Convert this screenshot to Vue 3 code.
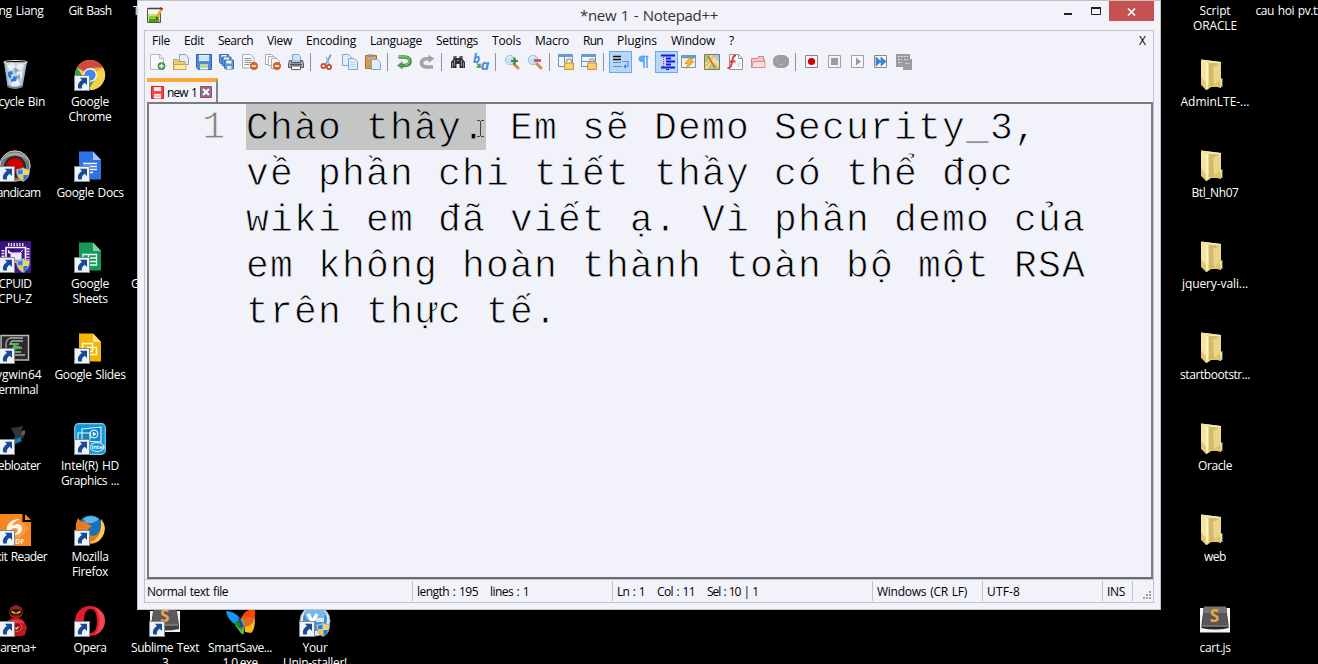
<script setup>
// Adjusts letter spacing so a run of text takes the given width in pixels.
const vFit = {
  mounted(el, { value }) {
    if (!value) return
    const n = el.textContent.length
    const natural = el.getBoundingClientRect().width
    el.style.letterSpacing = (value - natural) / n + 'px'
  },
}

const shortcut = '<g transform="translate(0 16)"><rect x=".5" y=".5" width="15" height="15" fill="#eef3f7" stroke="#85898d"/><path d="M5.8 2.8H13V10l-2.3-2.2C8.3 9.200 7.600 11 8 13.600H4.300C3.200 9.800 4.600 7.300 8 5z" fill="#174a94"/></g>'
const shield = '<g transform="translate(17 17)"><path d="M7 .5C9 2 11 2.300 13.500 2.300 13.800 8 12 12 7 14.500 2 12 .2 8 .5 2.300 3 2.300 5 2 7 .5z" fill="#cfd6dc" stroke="#808a92" stroke-width=".8"/><path d="M6.600 2C5 3 3.500 3.400 1.800 3.500V7.200H6.600z" fill="#2a82d8"/><path d="M7.400 2C9 3 10.500 3.400 12.200 3.500V7.200H7.400z" fill="#ffd23a"/><path d="M6.600 8H2C2.500 10.500 4 12.200 6.600 13.400z" fill="#ffc52a"/><path d="M7.400 8H12C11.500 10.500 10 12.200 7.400 13.400z" fill="#2277cf"/></g>'
const doc = (c, f, inner) => `<path d="M5 1.500H19L27 10V29.500H5z" fill="${c}"/><path d="M19 1.500L27 10H19z" fill="${f}"/>${inner}`

const art = {
  bin: '<path d="M5 3L8.500 28Q16 31.500 23.500 28L28 3z" fill="#9fb4c6"/><path d="M7 4L10 27Q16 29.500 22 27L26 4z" fill="#bccddc"/><path d="M8 7l5-4 4 5-6 4zM19 4l6 2-3 6-5-3zM10 14l5 2-1 5-3-1zM18 13l6-1-2 8-4-2zM12 22l7-1 2 5-8 1z" fill="#eaf1f6"/><path d="M15 8l5 3-4 3zM16 18l5-3 0 5z" fill="#8da5b9"/><ellipse cx="16.500" cy="3.300" rx="11.500" ry="1.800" fill="none" stroke="#d9e0e5" stroke-width="1.200"/><path d="M9 13l4-1 1 3-2 1 1 2-2 2-2-3zM14 17l4 1-1 4-5 1 0-3 2-1z" fill="#2e7cd8"/><path d="M9 27Q16 31 23 27" fill="none" stroke="#6b7b87" stroke-width="1.500"/>',
  chrome: '<circle cx="16" cy="16" r="15" fill="#f3cf4b"/><path d="M16 16L3 8.500A15 15 0 0 1 29 8.500L16 9z" fill="#d1493d"/><path d="M3 8.500A15 15 0 0 0 14.500 31L22 19 10 19z" fill="#2f9e58"/><path d="M16 9H29.300A15 15 0 0 1 14.500 31L22 19z" fill="#f5d14c"/><path d="M16 9H29.300L22 13z" fill="#e2b33a"/><circle cx="16" cy="16" r="7" fill="#f2f2f2"/><circle cx="16" cy="16" r="5.600" fill="#4286f0"/>' + shortcut,
  bandicam: '<circle cx="16" cy="16" r="15.200" fill="#747474" stroke="#d0d0d0"/><path d="M2 12A15 15 0 0 1 30 12 18 18 0 0 0 2 12z" fill="#a7a7a7"/><circle cx="16" cy="17" r="11" fill="#242424"/><ellipse cx="16" cy="15.500" rx="8.500" ry="7.500" fill="#cf0000"/>' + shortcut + shield,
  docs: doc('#2f72e8', '#a6c4f7', '<path d="M9 13.500H23M9 16.500H23M9 19.500H23M9 22.500H19" stroke="#f1f6ff" stroke-width="1.300"/>') + shortcut,
  sheets: doc('#14995b', '#8ad0ad', '<path d="M9 13.500H22.500V24H9zM9 17H22.500M9 20.500H22.500M14.500 13.500V24" fill="none" stroke="#eefaf4" stroke-width="1.300"/>') + shortcut,
  slides: doc('#f5b400', '#fbe08a', '<path d="M8.500 11.500H18.500V19.500H8.500zM13.500 15.500H22.500V22.500H13.500z" fill="none" stroke="#fffaf0" stroke-width="1.500"/>') + shortcut,
  cpuz: '<path d="M0 0H32V32H0z" fill="#38117c"/><path d="M0 22L32 0V32H0z" fill="#4a1b94" opacity=".6"/><path d="M7 6.500H26.500V21H7z" fill="none" stroke="#fff" stroke-width="1.600"/><path d="M9 3.500H25M4 9V22M29 7V20" stroke="#e8ddff" stroke-width="3" stroke-dasharray="1.400 1.400"/><path d="M12 12h10v7H12zM9.500 9v3h3M24 9l-3 3" fill="#f0eaff" stroke="#f0eaff"/>' + shortcut + shield,
  cygwin: '<path d="M2 3.500H29.500V28H2z" fill="#2b2b2b" stroke="#b9bbb9" stroke-width="1.500"/><path d="M24 6H11Q7 8 7 12V20H22M24 9H13L11 12H20M13 16h10M14 23H26" fill="none" stroke="#aab0aa" stroke-width="1.300"/><path d="M13 12l10 3-7 3z" fill="#31c740"/>' + shortcut,
  debloat: '<path d="M12 5L24 3 22 10l4-3-1 7-6 5-6 1 3-7z" fill="#30363c"/><path d="M23 8l3-1 0 4-4 2z" fill="#59636b"/><path d="M13 18l8-4 2 4-7 3z" fill="#127bb8"/>' + shortcut,
  intel: '<rect x=".7" y=".7" width="30.600" height="30.600" rx="4" fill="#1497d8" stroke="#77d1f5" stroke-width="1.200"/><path d="M8 6L27 4V19L8 18zM4 10H16V17H4z" fill="#1186c9" stroke="#e6f7ff" stroke-width="1.100"/><circle cx="20" cy="11" r="4" fill="none" stroke="#fff"/><path d="M18.800 8.800L22.500 11 18.800 13.200z" fill="#fff"/><ellipse cx="23" cy="24" rx="7" ry="4.500" fill="none" stroke="#def3ff"/><text x="17.500" y="26.300" font-family="Open Sans, sans-serif" font-size="5.500" font-weight="700" fill="#fff">intel</text>' + shortcut,
  foxit: '<path d="M0 0H23.500V8H32V32H0z" fill="#f5871f"/><path d="M26 0l6 6H26z" fill="#f5871f"/><path d="M19 4l11 11-11 11L8 15z" fill="#f9a75a" opacity=".6"/><path d="M8 20C6 10 12 5 21 5c-5 2-8 4-7 7 4-4 10-2 9 4-1 4-5 6-9 4 3 0 5-2 5-4-1-3-6-3-11 4z" fill="#fff3e3"/><text x="16" y="30" font-family="Open Sans, sans-serif" font-size="7" font-weight="700" fill="#fff3e3">DF</text>' + shortcut,
  firefox: '<circle cx="16.500" cy="15" r="13.500" fill="#1d6fb8"/><path d="M9 5Q17-1 25 5 20 10 13 9z" fill="#59b9e6"/><path d="M27 5Q33 12 29 22 24 31 14 30 4 27 2 17 1 10 4 4L7 8Q12 6 14 10L18 12 14 15Q13 21 19 22 26 21 27 13z" fill="#e77b1f"/><path d="M27 5Q34 14 28 23 22 31 13 28 23 28 26 18 28 12 27 5z" fill="#f8ce4b"/>' + shortcut,
  garena: '<circle cx="17" cy="7" r="6.800" fill="#94201f"/><path d="M11 6Q17 2 23 6V9Q17 12 11 9z" fill="#2c1111"/><path d="M12.500 6.500l4 2M21.500 6.500l-4 2" stroke="#ffb21f" stroke-width="1.400"/><path d="M8 16Q16 10 24 15L28 22 26 30Q17 33 8 29z" fill="#c4161c"/><path d="M9 18Q17 13 25 18" stroke="#ee4848" stroke-width="1.500" fill="none"/><circle cx="18" cy="22" r="4.500" fill="#8d0e12" stroke="#e46a6a"/><path d="M15 23l6-2-3 4z" fill="#f09a9a"/>' + shortcut,
  opera: '<path fill-rule="evenodd" d="M16 1A15 15 0 1 0 16 31 15 15 0 0 0 16 1zM16.500 4C21 4 23 9 23 16S21 28 16.500 28 10 23 10 16 12 4 16.500 4z" fill="#e41b2c"/><path d="M20 2Q31 6 31 16 30 27 20 30.500 26 24 25.500 14 25 7 20 2z" fill="#f2484f"/>' + shortcut,
  sublime: '<path d="M1 6H31V27H1z" fill="#f0f0f0"/><path d="M5 0H27L30 20V24Q16 27 2 24V20z" fill="#3f3f3f"/><path d="M5 1H27L29 19H3z" fill="#5b5b5b"/><path d="M3 20H29" stroke="#aaa"/><text x="11" y="16.500" font-family="Open Sans, sans-serif" font-size="17" font-weight="700" fill="#f2a24a">S</text>' + shortcut,
  cart: '<path d="M1 3H31V27.500H1z" fill="#f4f4f4"/><path d="M5 1H27L29.500 20V23Q16 26 2.500 23V20z" fill="#242424"/><path d="M5 1.500H27L29 20.500H3z" fill="#565656"/><path d="M5 2H27L28 8H4z" fill="#747474"/><path d="M3 21H29" stroke="#aaa"/><text x="10.700" y="17" font-family="Open Sans, sans-serif" font-size="17" font-weight="700" fill="#f5a340">S</text>',
  smart: '<path d="M2 6Q10 6 16 13L18 22Q4 18 2 6z" fill="#1298fa"/><path d="M17 13Q23 2 31 5V15L19 17z" fill="#ff4500"/><path d="M11 20Q13 12 20 14L20 28Q19 31 16 27z" fill="#59b75a"/><path d="M11 18Q13 14 17 16L18 25Q13 23 11 18z" fill="#0a9118"/><path d="M20 18L31 14Q31 25 27 28L21 27z" fill="#fdb813"/><path d="M20 13Q26 10 30 14 29 21 20 22z" fill="#dd6b27"/><path d="M15 11L20 22 17 22 14 14z" fill="#3c2bbb"/>',
  unins: '<circle cx="16" cy="16" r="15" fill="#e5eaee" stroke="#a4afb7"/><circle cx="16" cy="14" r="12" fill="#3b8fdc"/><path d="M5 8Q16-2 27 8L24 15H8z" fill="#74b8ef"/><path d="M9 9l5 9M18 9l-5 9" stroke="#fff" stroke-width="3.500"/><path d="M17 13h8v4h-8z" fill="#dbe7f0"/>' + shortcut + shield,
  folder: '<path d="M2 .5L22 3V28L12 28 8 31 2 25.500z" fill="#e6d088"/><path d="M8 3L22 5V28L10 27z" fill="#d3b96c"/><path d="M14 8L22 4V20L15 26z" fill="#ead58c"/><path d="M2 .5L22 3V4.500L8 3.500z" fill="#f5eaba"/><path d="M2 1L9 4V28.500L7.500 31 2 25.500z" fill="#f4e69c"/><path d="M2 18L7 24V31L2 25.500z" fill="#e3c772"/><path d="M7 4H9.500V24L7 30z" fill="#fff5be"/><path d="M17 25L22 19V29L14 27z" fill="#f0c63f"/><path d="M21.500 20H23V27L21 29z" fill="#fff"/><path d="M23 19V28" stroke="#b7b08b"/><path d="M21 23V28" stroke="#8db9df"/>',
}

// col and row are desktop grid slots; each line is [text, width]; dx shifts a label.
const desktop = [
  { col: 1, row: 1, lines: [['ng Liang', 45]], dx: 6 },
  { col: 2, row: 1, lines: [['Git Bash', 43]] },
  { col: 3, row: 1, lines: [['T', 6]], dx: -29 },
  { col: 17, row: 1, lines: [['Script', 31], ['ORACLE', 44]] },
  { col: 18, row: 1, lines: [['cau hoi pv.txt', 71]], dx: 1 },
  { col: 1, row: 2, art: 'bin', lines: [['Recycle Bin', 60]] },
  { col: 2, row: 2, art: 'chrome', lines: [['Google', 38], ['Chrome', 43]] },
  { col: 17, row: 2, art: 'folder', lines: [['AdminLTE-...', 69]] },
  { col: 1, row: 3, art: 'bandicam', lines: [['Bandicam', 51]] },
  { col: 2, row: 3, art: 'docs', lines: [['Google Docs', 67]] },
  { col: 17, row: 3, art: 'folder', lines: [['Btl_Nh07', 47]] },
  { col: 1, row: 4, art: 'cpuz', lines: [['CPUID', 33], ['CPU-Z', 34]] },
  { col: 2, row: 4, art: 'sheets', lines: [['Google', 38], ['Sheets', 35]] },
  { col: 3, row: 4, lines: [['G', 8]], dx: -30 },
  { col: 17, row: 4, art: 'folder', lines: [['jquery-vali...', 66]] },
  { col: 1, row: 5, art: 'cygwin', lines: [['Cygwin64', 53], ['Terminal', 46]] },
  { col: 2, row: 5, art: 'slides', lines: [['Google Slides', 71]] },
  { col: 17, row: 5, art: 'folder', lines: [['startbootstr...', 70]] },
  { col: 1, row: 6, art: 'debloat', lines: [['Debloater', 51]] },
  { col: 2, row: 6, art: 'intel', lines: [['Intel(R) HD', 58], ['Graphics ...', 58]] },
  { col: 17, row: 6, art: 'folder', lines: [['Oracle', 34]] },
  { col: 1, row: 7, art: 'foxit', lines: [['Foxit Reader', 64]] },
  { col: 2, row: 7, art: 'firefox', lines: [['Mozilla', 37], ['Firefox', 36]] },
  { col: 17, row: 7, art: 'folder', lines: [['web', 22]] },
  { col: 1, row: 8, art: 'garena', lines: [['Garena+', 44]], dx: -1 },
  { col: 2, row: 8, art: 'opera', lines: [['Opera', 33]] },
  { col: 3, row: 8, art: 'sublime', lines: [['Sublime Text', 68], ['3', 6]] },
  { col: 4, row: 8, art: 'smart', lines: [['SmartSave...', 64], ['1.0.exe', 35]] },
  { col: 5, row: 8, art: 'unins', lines: [['Your', 25], ['Unin-staller!', 64]] },
  { col: 17, row: 8, art: 'cart', lines: [['cart.js', 31]] },
]

const menus = [
  ['File', 18], ['Edit', 20], ['Search', 35], ['View', 25], ['Encoding', 50], ['Language', 52],
  ['Settings', 42], ['Tools', 29], ['Macro', 34], ['Run', 20], ['Plugins', 40], ['Window', 44], ['?', 6],
]

const page = (x, y, w, h, c = '#7da7d9', f = '#e2effb') =>
  `<path d="M${x} ${y}h${w - 3}l3 3v${h - 3}h-${w}z" fill="${f}" stroke="${c}"/>`
const floppy = '<path d="M.5.5h15v15h-13l-2-2z" fill="#4f8cd6" stroke="#2e62ad"/><path d="M3 1h10v6H3z" fill="#e9f3fc"/><path d="M4 10h8v5.500H4z" fill="#f2f7fb"/><path d="M4 11h8M4 13h8" stroke="#7cb85b"/><path d="M3 3h10M3 5h10" stroke="#b7d3ee"/>'
const smallFloppy = (x, y) => `<g transform="translate(${x} ${y})"><path d="M.5.500h9v9h-8l-1-1z" fill="#5d95da" stroke="#3a6db5"/><path d="M2.500 1h5v3h-5z" fill="#edf5fc"/><path d="M3 6.500h4.500v3H3z" fill="#d7ebc8"/></g>`
const minus = '<circle cx="12" cy="12" r="3.700" fill="#df6420" stroke="#b94a10" stroke-width=".6"/><path d="M9.800 12h4.400" stroke="#fff" stroke-width="1.500"/>'
const lock = '<path d="M8.500 9V7.500a2.500 2.500 0 0 1 5 0V9" fill="none" stroke="#b4aa93" stroke-width="1.500"/><path d="M6.500 9h9v6.500h-9z" fill="#f3c45a" stroke="#d69a32"/><path d="M8 11h6M8 13h6" stroke="#ffe49a"/>'
const lens = '<path d="M9.500 9.500l4.500 4.500" stroke="#c99143" stroke-width="3" stroke-linecap="round"/><circle cx="6" cy="6" r="4.700" fill="#c5e0f5" stroke="#a8bdd0"/><path d="M3 5q1-2 4-2" fill="none" stroke="#fff"/>'
const macroBox = (c, inner) => `<path d="M1.500 1.500h12v12h-12z" fill="#f5f6fb" stroke="${c}"/>${inner}`

const glyphs = {
  new: '<path d="M.5.5h9l4 4v11H.5z" fill="#f8f9fc" stroke="#b8bac0"/><path d="M9.500.5v4h4" fill="none" stroke="#b8bac0"/><circle cx="11.500" cy="12" r="3.600" fill="#4b9b4a" stroke="#307b34" stroke-width=".6"/><path d="M9.300 12h4.400M11.500 9.800v4.400" stroke="#fff" stroke-width="1.300"/>',
  open: page(6.5, 0.5, 9, 10) + '<path d="M0.500 5.500h4l1.500 2h6v8H.5z" fill="#f0cb78" stroke="#c99a43"/><path d="M1 10.500h12v5H1z" fill="#ffe9a9" stroke="#d2a650"/>',
  save: floppy,
  saveAll: smallFloppy(0, 0) + smallFloppy(2.500, 2.500) + smallFloppy(5, 5.500),
  close: '<path d="M.5.500h8l3.500 3.500v10H.5z" fill="#f8f9fc" stroke="#a9abb0"/><path d="M2.500 4.500h7M2.500 6.500h7M2.500 8.500h7M2.500 10.500h5" stroke="#8d9096"/>' + minus,
  closeAll: '<path d="M.5.500h6l2 2v8h-8z" fill="#fafbfd" stroke="#a9abb0"/><path d="M3.500 2.500h6l2 2v7h-8z" fill="#fafbfd" stroke="#a9abb0"/><path d="M6.500 4.500h5l3 3v7h-8z" fill="#fafbfd" stroke="#a9abb0"/>' + minus,
  print: '<path d="M4.500 7V.500h6l2 2V7z" fill="#cce4f8" stroke="#7aa6d6"/><path d="M1.500 6.500h2v2h9v-2h2l1 3v4h-15v-4z" fill="#aeb1b6" stroke="#53565b"/><path d="M3.500 12h9v3.500h-9z" fill="#fff" stroke="#5a5d62"/><path d="M2 10.500h12" stroke="#56595e" stroke-width="1.500"/>',
  cut: '<path d="M12 .500L7 10" stroke="#7c9fc5" stroke-width="1.800"/><path d="M7 3L10.500 10.500" stroke="#9db7d4" stroke-width="1.500"/><circle cx="4.500" cy="12" r="2.100" fill="none" stroke="#c24a38" stroke-width="1.800"/><circle cx="10" cy="13" r="2.100" fill="none" stroke="#c24a38" stroke-width="1.800"/>',
  copy: page(0.5, 0.5, 9, 11) + page(6.5, 4.5, 9, 11) + '<path d="M8.500 8.500h4M8.500 10.500h5M8.500 12.500h5" stroke="#b3d0ee"/>',
  paste: '<path d="M.5 1.500h11v13H.5z" fill="#d29a4b" stroke="#a87328"/><path d="M3 .500h6v3H3z" fill="#8c8d90"/><path d="M2 4h8" stroke="#efc27b"/>' + page(6.5, 5.5, 9, 10),
  undo: '<path d="M2.500 3h6q5.500.200 5.500 4.300T8.500 11.500H5" fill="none" stroke="#3c9140" stroke-width="3.600"/><path d="M3 2.800h5.500q4.800.200 4.800 4T8.500 11.500" fill="none" stroke="#7cc46c" stroke-width="1.500"/><path d="M6.500 7.300v8.200L1 11.500z" fill="#4fa24a"/>',
  redo: '<path d="M14 13H7Q2.500 12.500 2.500 9T7 4.800H11" fill="none" stroke="#a2a3a6" stroke-width="3.600"/><path d="M9.500.800v8L15.500 4.800z" fill="#a2a3a6"/>',
  find: '<path d="M3.500 2h3v2h3V2h3v3l2.500 3v6H9.500v-4h-3v4H1V8l2.500-3z" fill="#2e3033"/><path d="M2.500 8.500v5M4.500 6v6M11.500 6v6M13.500 8.500v5M4 3h2M10 3h2M7 6.500h2" stroke="#8b9095"/>',
  replace: '<text x="0" y="9" font-family="Open Sans, sans-serif" font-size="12" font-weight="700" font-style="italic" fill="#3e86da">b</text><text x="7.500" y="15.500" font-family="Open Sans, sans-serif" font-size="15" font-weight="700" font-style="italic" fill="#4a8fdc">a</text><path d="M4 9.500l3 3M7 9.500v3.500H3.500" stroke="#3a8f44" stroke-width="1.300" fill="none"/>',
  zoomIn: lens + '<path d="M10.500 3.500v7M7 7h7" stroke="#3c8b3a" stroke-width="2.200"/>',
  zoomOut: lens + '<path d="M7 6.500h7" stroke="#e1434a" stroke-width="2.600"/>',
  syncV: '<path d="M.5.500h14v12H.5z" fill="#eff6fd" stroke="#6592c9"/><path d="M0 2h15" stroke="#6c9bd2" stroke-width="2"/><path d="M6.500 3v9" stroke="#6592c9"/>' + lock,
  syncH: '<path d="M.5.500h14v12H.5z" fill="#eff6fd" stroke="#6592c9"/><path d="M0 2h15" stroke="#6c9bd2" stroke-width="2"/><path d="M.500 7.500h14" stroke="#6592c9"/>' + lock,
  wrap: '<path d="M1 2.500h8M1 5.500h8" stroke="#151515" stroke-width="1.300"/><path d="M1 8.500h8M1 12.500h9" stroke="#7486a0"/><path d="M10 7.500h6v5h-3" fill="none" stroke="#5b93da" stroke-width="1.200"/><path d="M14 10v5L11.500 12.500z" fill="#3f7fd0"/>',
  pilcrow: '<path d="M9 14V3M12 14V3M13.500 2.500H6" fill="none" stroke="#61a9ee" stroke-width="1.700"/><path d="M9 1.700H7q-3.500 0-3.500 3T7 8h2z" fill="#61a9ee"/>',
  indent: '<path d="M3 1.500h14M8 4.500h5M8 7.500h9M8 10.500h5M3 13.500h14" stroke="#1515ea" stroke-width="1.800"/><path d="M5.500 3v10" stroke="#d33" stroke-dasharray="1 1"/><path d="M8 15.500h3" stroke="#1515ea"/>',
  udl: '<path d="M.5 1.500h14v12H.5z" fill="#f7f1dc" stroke="#6898cf"/><path d="M0 3h15" stroke="#6898cf" stroke-width="2.500"/><path d="M8 4.500h4l-2 3h3l-8 7 2-5H4z" fill="#f6b337" stroke="#d88a1f" stroke-width=".7"/>',
  map: '<path d="M.5.500h15v15H.5z" fill="#e9dfa0" stroke="#7d746b"/><path d="M1 1h5l-1 5-4 3z" fill="#9ccb78"/><path d="M8 1h7v7z" fill="#9ccdf0"/><path d="M7 9l8 6H3z" fill="#a9d282"/><path d="M1 13L10 1M6 7l9 7" stroke="#f1b640" stroke-width="1.500" fill="none"/><path d="M4 2l7 12" stroke="#d6503d" stroke-width="1.300" fill="none"/>',
  func: '<path d="M2.500.5h9l4 4v11h-13z" fill="#fafbfd" stroke="#94979d"/><path d="M11.500.5v4h4" fill="none" stroke="#94979d"/><path d="M9 1.500Q6 1 5.500 6L4 12q-1 2.500-3.500 2M2.500 7.500h6" fill="none" stroke="#df3a3a" stroke-width="2"/><path d="M11 8v5M13 9v4" stroke="#a9acb2" stroke-dasharray="1 1"/>',
  tree: '<path d="M1.500 13.500v-9h6l1-2h5v3h1v8z" fill="#f3c7c5" stroke="#d48181"/><path d="M1.500 13.500l2-6h11.500v6z" fill="#f8dedb" stroke="#dc8d8b"/>',
  monitor: '<path d="M5 1h6q5 2 5 5v3q0 3-5 5H5Q0 12 0 9V6q0-3 5-5z" fill="#9c9da0"/><path d="M3 6.500h1.500M11.500 6.500H13M5.500 10l2.500 1 2.500-1" stroke="#b8babd" fill="none"/>',
  rec: macroBox('#86888c', '<circle cx="7.500" cy="7.500" r="3.600" fill="#cf0000"/>'),
  stop: macroBox('#9fa1a5', '<path d="M4 4h7v7H4z" fill="#9b9c9e"/>'),
  play: macroBox('#9fa1a5', '<path d="M6 3.500l5 4-5 4z" fill="#97989b"/>'),
  fast: macroBox('#86888c', '<path d="M3 3l5 4.500L3 12zM8 3l5 4.500L8 12z" fill="#3f84d6" stroke="#2868b6" stroke-width=".6"/>'),
  saveMacro: '<path d="M0 0h14v5h2v11H7v-3H0z" fill="#9b9c9f"/><path d="M2 2.500h10M2 5.500h4M2 8.500h4M8 5.500h4M9.500 9.500h4" stroke="#dfe1e7" stroke-dasharray="2 1" fill="none"/>',
}

const toolbar = [
  ['new', 'open', 'save', 'saveAll', 'close', 'closeAll', 'print'],
  ['cut', 'copy', 'paste'],
  ['undo', 'redo'],
  ['find', 'replace'],
  ['zoomIn', 'zoomOut'],
  ['syncV', 'syncH'],
  ['wrap', 'pilcrow', 'indent', 'udl', 'map', 'func', 'tree', 'monitor'],
  ['rec', 'stop', 'play', 'fast', 'saveMacro'],
]
const pressed = ['wrap', 'indent']

const status = [
  { cls: 'kind', parts: [['Normal text file', 81]] },
  { cls: 'size', parts: [['length : 195', 61], ['lines : 1', 39]] },
  { cls: 'place', parts: [['Ln : 1', 28], ['Col : 11', 38], ['Sel : 10 | 1', 51]] },
  { cls: 'eol', parts: [['Windows (CR LF)', 90]] },
  { cls: 'enc', parts: [['UTF-8', 33]] },
  { cls: 'ins', parts: [['INS', 18]] },
]

const rest = [
  'về phần chi tiết thầy có thể đọc',
  'wiki em đã viết ạ. Vì phần demo của',
  'em không hoàn thành toàn bộ một RSA',
  'trên thực tế.',
]
</script>

<template>
  <div class="screen">
    <div class="icons">
      <div
        v-for="(it, i) in desktop"
        :key="i"
        class="item"
        :style="{ gridColumn: it.col, gridRow: it.row }"
      >
        <svg class="art" viewBox="0 0 32 32" v-html="art[it.art] || ''"></svg>
        <div class="label" :style="{ transform: it.dx ? `translateX(${it.dx}px)` : null }">
          <span v-for="l in it.lines" :key="l[0]" v-fit="l[1]">{{ l[0] }}</span>
        </div>
      </div>
    </div>

    <div class="window">
      <header class="titlebar">
        <svg class="appicon" viewBox="0 0 16 16">
          <path d="M.5 1.500h13v14H.5z" fill="#f4f6ee" stroke="#555" />
          <path d="M1 7h12v8H1z" fill="#c5e27c" />
          <path d="M2 9h10v6H2z" fill="#8fc92a" />
          <path d="M2 12h10v3H2z" fill="#4e9b22" />
          <path d="M1.500 1.500h12" stroke="#333" stroke-width="2" stroke-dasharray="1 1" />
          <path d="M15 1.500L10 10" stroke="#efa42a" stroke-width="2.500" />
          <path d="M13.500 0l2.500 1.500-1 1.500-2.500-1.500z" fill="#8e1f1f" />
          <path d="M9 12.500l.300-3 2 1.200z" fill="#3a2a15" />
        </svg>
        <div class="title"><span v-fit="138">*new 1 - Notepad++</span></div>
        <div class="controls">
          <svg viewBox="0 0 44 20" class="minmax">
            <path d="M3 13h8v2H3z" fill="#222" />
            <path d="M30.500 8.500h9v6h-9z" fill="none" stroke="#222" />
            <path d="M30 8h10" stroke="#222" stroke-width="2" />
          </svg>
          <div class="closebtn">
            <svg viewBox="0 0 9 8"><path d="M1 .5l7 7M8 .5l-7 7" stroke="#fff" stroke-width="1.700" /></svg>
          </div>
        </div>
      </header>

      <div class="frame">
        <nav class="menu">
          <span v-for="m in menus" :key="m[0]" v-fit="m[1]">{{ m[0] }}</span>
          <span v-fit="7" class="docclose">X</span>
        </nav>

        <div class="toolbar">
          <div v-for="(g, gi) in toolbar" :key="gi" class="group">
            <div v-for="n in g" :key="n" class="tool" :class="{ on: pressed.includes(n) }">
              <svg viewBox="0 0 16 16" v-html="glyphs[n]"></svg>
            </div>
          </div>
        </div>

        <div class="tabs">
          <div class="tab">
            <svg class="unsaved" viewBox="0 0 13 13">
              <path d="M.500.500h12v12h-12z" fill="#f4484c" stroke="#dc2026" />
              <path d="M3 1h7v4H3z" fill="#fde5e5" />
              <path d="M3 8h7v4.500H3z" fill="#fff" />
              <path d="M3 10h7" stroke="#f27b7b" />
            </svg>
            <span v-fit="30">new 1</span>
            <svg class="tabclose" viewBox="0 0 12 12">
              <path d="M.500.500h11v11h-11z" fill="#8d6f90" stroke="#a14a62" />
              <path d="M3 3l6 6M9 3L3 9" stroke="#fff" stroke-width="2" />
            </svg>
          </div>
        </div>

        <div class="editor">
          <div class="gutter">1</div>
          <div class="text">
            <div class="line"><span class="sel">Chào thầy.</span> Em sẽ Demo Security_3,</div>
            <div v-for="r in rest" :key="r" class="line">{{ r }}</div>
            <svg class="ibeam" viewBox="0 0 7 17">
              <path d="M0 .5h3M4 .5h3M3.500 1v15M0 16.500h3M4 16.500h3" stroke="#444" fill="none" />
            </svg>
          </div>
        </div>

        <footer class="status">
          <div v-for="s in status" :key="s.cls" class="cell" :class="s.cls">
            <span v-for="p in s.parts" :key="p[0]" v-fit="p[1]">{{ p[0] }}</span>
          </div>
          <svg class="grip" viewBox="0 0 8 8">
            <path d="M6 0h2v2H6zM3 3h2v2H3zM6 3h2v2H6zM0 6h2v2H0zM3 6h2v2H3zM6 6h2v2H6z" fill="#a0a0a4" />
          </svg>
        </footer>
      </div>
    </div>
  </div>
</template>

<style>
body {
  margin: 0;
  background: #000;
}
</style>

<style scoped>
.screen {
  position: relative;
  width: 1318px;
  height: 664px;
  overflow: hidden;
  background: #000;
  font: 12px/15px "Open Sans", "Noto Sans", sans-serif;
  word-spacing: 1px;
  color: #000;
}
.screen span {
  white-space: pre;
}
.icons {
  display: grid;
  grid-template-columns: repeat(18, 75px);
  grid-template-rows: repeat(8, 91px);
  margin: -32px 0 0 -22px;
}
.item {
  color: #fff;
}
.art {
  display: block;
  width: 32px;
  height: 32px;
  margin-left: 21px;
}
.label {
  display: flex;
  flex-direction: column;
  align-items: center;
  width: 74px;
  margin-top: 3px;
}
.window {
  position: absolute;
  left: 137px;
  top: 0;
  width: 1024px;
  height: 610px;
  box-sizing: border-box;
  border: 1px solid #c3c3c6;
  background: #f2f3fa;
  padding: 0 6px 6px;
  display: flex;
  flex-direction: column;
}
.titlebar {
  height: 29px;
  flex: none;
  display: flex;
  align-items: flex-start;
  justify-content: space-between;
}
.appicon {
  width: 16px;
  height: 16px;
  margin: 6px 0 0 3px;
}
.title {
  font-size: 15px;
  line-height: 20px;
  margin: 4px 0 0 74px;
  color: #333;
}
.title span {
  display: inline-block;
}
.controls {
  display: flex;
}
.minmax {
  width: 44px;
  height: 20px;
  margin-top: -1px;
  margin-right: 4px;
}
.closebtn {
  width: 45px;
  height: 20px;
  background: #c75050;
  display: flex;
  align-items: center;
  justify-content: center;
}
.closebtn svg {
  width: 9px;
  height: 8px;
  margin-top: 1px;
}
.frame {
  flex: 1;
  box-sizing: border-box;
  border: 1px solid #c3c3c6;
  display: flex;
  flex-direction: column;
}
.menu {
  height: 19px;
  padding: 0 7px 1px;
  display: flex;
  align-items: center;
  gap: 14px;
}
.docclose {
  margin-left: auto;
}
.toolbar {
  display: flex;
  padding-left: 2px;
  height: 26px;
}
.group {
  display: flex;
}
.group + .group {
  margin-left: 2px;
  padding-left: 5px;
  border-left: 1px solid transparent;
  background: linear-gradient(#929296, #929296) -1px 2px / 1px 18px no-repeat border-box;
  background-origin: padding-box;
}
.tool {
  width: 23px;
  height: 22px;
  box-sizing: border-box;
  padding: 3px;
}
.tool.on {
  border: 1px solid #65aaf0;
  background: #b9d7f6;
  padding: 2px;
}
.tool svg {
  display: block;
  width: 16px;
  height: 16px;
  overflow: visible;
}
.tabs {
  height: 25px;
  padding-left: 2px;
  display: flex;
  margin-top: 1px;
}
.tab {
  width: 71px;
  height: 24px;
  box-sizing: border-box;
  border-top: 4px solid #faa938;
  border-right: 2px solid #858589;
  display: flex;
  align-items: center;
  padding-left: 4px;
}
.unsaved {
  width: 13px;
  height: 13px;
  margin-right: 3px;
}
.tabclose {
  width: 12px;
  height: 12px;
  margin-left: 3px;
}
.editor {
  flex: 1;
  margin: -1px 0 0 2px;
  border: 2px solid #6b6b6e;
  border-color: #7b7b7e #7f7f82 #6b6b6e #7b7b7e;
  display: flex;
  font: 38px/46px "Liberation Mono", monospace;
  word-spacing: 0;
  -webkit-text-stroke: 0.8px #f2f3fa;
}
.gutter {
  box-sizing: border-box;
  width: 97px;
  padding: 1px 21px 0 0;
  text-align: right;
  color: #858585;
}
.text {
  position: relative;
  letter-spacing: 1.196px;
}
.line {
  height: 46px;
  line-height: 49px;
  white-space: pre;
}
.line .sel {
  display: inline-block;
  height: 46px;
  background: #c4c6c5;
  -webkit-text-stroke-color: #c4c6c5;
  vertical-align: top;
}
.ibeam {
  position: absolute;
  left: 231px;
  top: 16px;
  width: 7px;
  height: 17px;
}
.status {
  height: 22px;
  border-top: 1px solid #c3c3c6;
  display: flex;
  align-items: center;
}
.cell {
  height: 20px;
  box-sizing: border-box;
  border-right: 1px solid #c3c3c6;
  padding-left: 4px;
  display: flex;
  align-items: center;
  gap: 12px;
}
.kind {
  width: 268px;
  padding-left: 2px;
}
.size {
  width: 200px;
}
.place {
  width: 260px;
}
.eol {
  width: 110px;
}
.enc {
  width: 120px;
}
.ins {
  width: 30px;
}
.grip {
  width: 8px;
  height: 8px;
  margin: 8px 0 0 10px;
}
</style>
